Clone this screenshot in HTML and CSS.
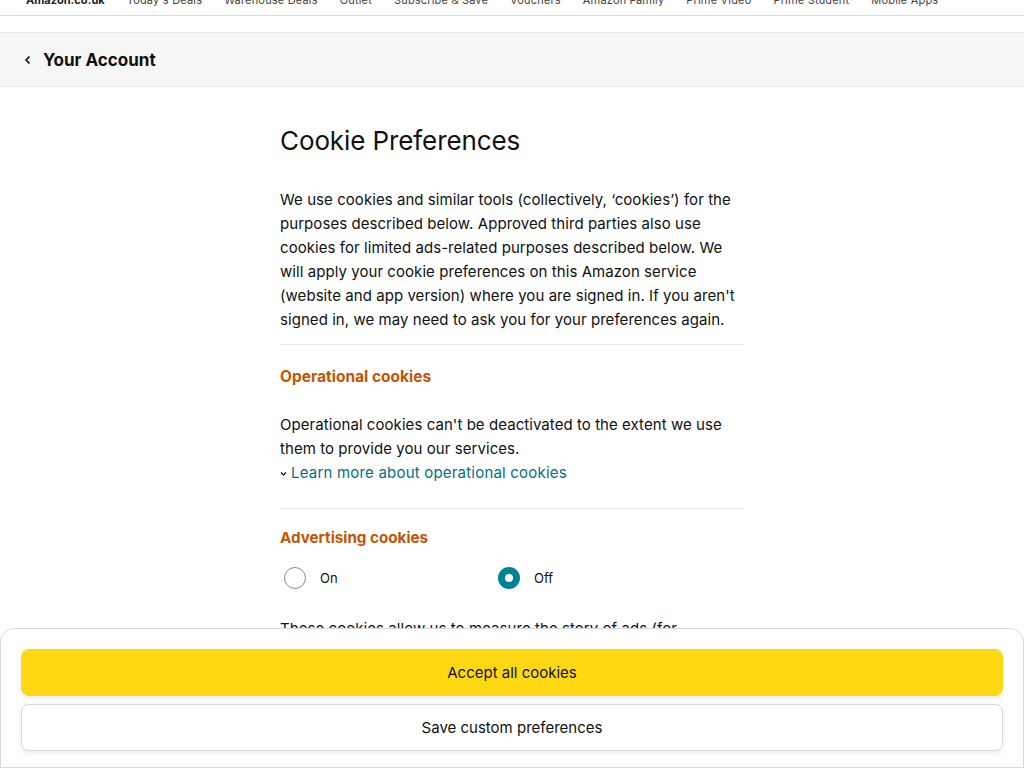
FILE: index.html
```html
<!DOCTYPE html>
<html lang="en">
<head>
<meta charset="utf-8">
<title>Cookie Preferences</title>
<link rel="stylesheet" href="styles.css">
</head>
<body>
<nav class="topnav">
  <ul class="topnav-list">
    <li class="brand">Amazon.co.uk</li>
    <li>Today's Deals</li>
    <li>Warehouse Deals</li>
    <li>Outlet</li>
    <li>Subscribe &amp; Save</li>
    <li>Vouchers</li>
    <li>Amazon Family</li>
    <li>Prime Video</li>
    <li>Prime Student</li>
    <li>Mobile Apps</li>
  </ul>
</nav>

<header class="account-bar">
  <svg class="back-icon" width="8" height="10" viewBox="0 0 8 10" aria-hidden="true"><path d="M5.5 1.5 L2 5 L5.5 8.5" fill="none" stroke="#333" stroke-width="1.8"/></svg>
  <span class="account-title">Your Account</span>
</header>

<main class="content">
  <h1 class="page-title">Cookie Preferences</h1>
  <p class="body-text">We use cookies and similar tools (collectively, ‘cookies’) for the purposes described below. Approved third parties also use cookies for limited ads-related purposes described below. We will apply your cookie preferences on this Amazon service (website and app version) where you are signed in. If you aren't signed in, we may need to ask you for your preferences again.</p>

  <section class="section">
    <h2 class="section-title">Operational cookies</h2>
    <p class="body-text">Operational cookies can't be deactivated to the extent we use them to provide you our services.</p>
    <a class="learn-more" href="#"><svg class="chev" width="7" height="6" viewBox="0 0 7 6" aria-hidden="true"><path d="M1 1.5 L3.5 4 L6 1.5" fill="none" stroke="#111" stroke-width="1.2"/></svg>Learn more about operational cookies</a>
  </section>

  <section class="section section-ads">
    <h2 class="section-title">Advertising cookies</h2>
    <div class="radio-row">
      <label class="radio"><span class="radio-circle"></span><span class="radio-label">On</span></label>
      <label class="radio"><span class="radio-circle checked"></span><span class="radio-label">Off</span></label>
    </div>
    <p class="body-text">These cookies allow us to measure the story of ads (for example, ads you click) and to show you relevant ads on and off Amazon.</p>
  </section>
</main>

<div class="consent-panel">
  <button class="btn btn-primary">Accept all cookies</button>
  <button class="btn btn-secondary">Save custom preferences</button>
</div>
</body>
</html>
```
FILE: styles.css
```css
html, body {
  margin: 0;
  padding: 0;
}
body {
  font-family: Inter, "Noto Sans", sans-serif;
  color: #0f1111;
  background: #fff;
  overflow: hidden;
  height: 768px;
}
.topnav {
  height: 15px;
  border-bottom: 1px solid #dddddd;
  overflow: hidden;
  background: #fff;
}
.topnav-list {
  list-style: none;
  margin: -8px 0 0 26px;
  padding: 0;
  display: flex;
  gap: 22px;
  font-size: 11px;
  line-height: 16px;
  letter-spacing: 0.18px;
  color: #444;
}
.topnav-list li {
  white-space: nowrap;
}
.topnav-list .brand {
  font-weight: 700;
  color: #222;
  letter-spacing: 0.05px;
}
.account-bar {
  margin-top: 16px;
  height: 53px;
  background: #f6f6f6;
  border-top: 1px solid #e7e7e7;
  border-bottom: 1px solid #e7e7e7;
  display: flex;
  align-items: center;
  padding-left: 24px;
}
.back-icon {
  margin-right: 11px;
  margin-top: 1px;
}
.account-title {
  font-size: 17px;
  font-weight: 700;
  color: #111;
}
.content {
  width: 464px;
  margin: 0 auto;
  padding-top: 36px;
  height: 605px;
  box-sizing: border-box;
  overflow: hidden;
}
.page-title {
  font-size: 26px;
  font-weight: 400;
  line-height: 36px;
  margin: 0 0 29px 0;
  letter-spacing: -0.1px;
  color: #111;
}
.body-text {
  font-size: 15px;
  line-height: 24px;
  margin: 0;
  letter-spacing: 0.06px;
  color: #0f1111;
}
.section {
  border-top: 1px solid #e7e7e7;
  margin-top: 12px;
  padding-top: 20px;
}
.section-title {
  font-size: 15.5px;
  font-weight: 700;
  color: #c45500;
  margin: 0 0 24px 0;
  line-height: 24px;
}
.learn-more {
  display: flex;
  align-items: center;
  font-size: 15px;
  line-height: 24px;
  letter-spacing: 0.2px;
  color: #007185;
  text-decoration: none;
  margin-bottom: 23px;
}
.chev {
  margin-right: 4px;
  margin-top: 1px;
}
.section-ads {
  margin-top: 12px;
  padding-top: 17px;
}
.section-ads .section-title {
  font-size: 15.2px;
  margin-bottom: 17px;
}
.radio-row {
  display: flex;
  margin-bottom: 28px;
}
.radio {
  display: flex;
  align-items: center;
  width: 210px;
  padding-left: 4px;
}
.radio-circle {
  width: 22px;
  height: 22px;
  box-sizing: border-box;
  border: 1px solid #888c8c;
  border-radius: 50%;
  margin-right: 14px;
  background: #fff;
}
.radio-circle.checked {
  border: 7px solid #008296;
  background: #fff;
}
.radio-label {
  font-size: 13px;
  color: #111;
}
.consent-panel {
  position: fixed;
  left: 0;
  right: 0;
  top: 628px;
  bottom: 0;
  background: #fff;
  border: 1px solid #d5d9d9;
  border-radius: 14px 14px 0 0;
  padding: 20px 20px 0 20px;
  display: flex;
  flex-direction: column;
  gap: 8px;
}
.btn {
  font-family: inherit;
  font-size: 15px;
  color: #0f1111;
  height: 47px;
  border-radius: 8px;
  cursor: pointer;
}
.btn-primary {
  background: #ffd814;
  border: 1px solid #ffd814;
  box-shadow: 0 2px 5px rgba(213,217,217,.5);
}
.btn-secondary {
  background: #fff;
  border: 1px solid #d5d9d9;
  box-shadow: 0 2px 5px rgba(213,217,217,.5);
}
```
